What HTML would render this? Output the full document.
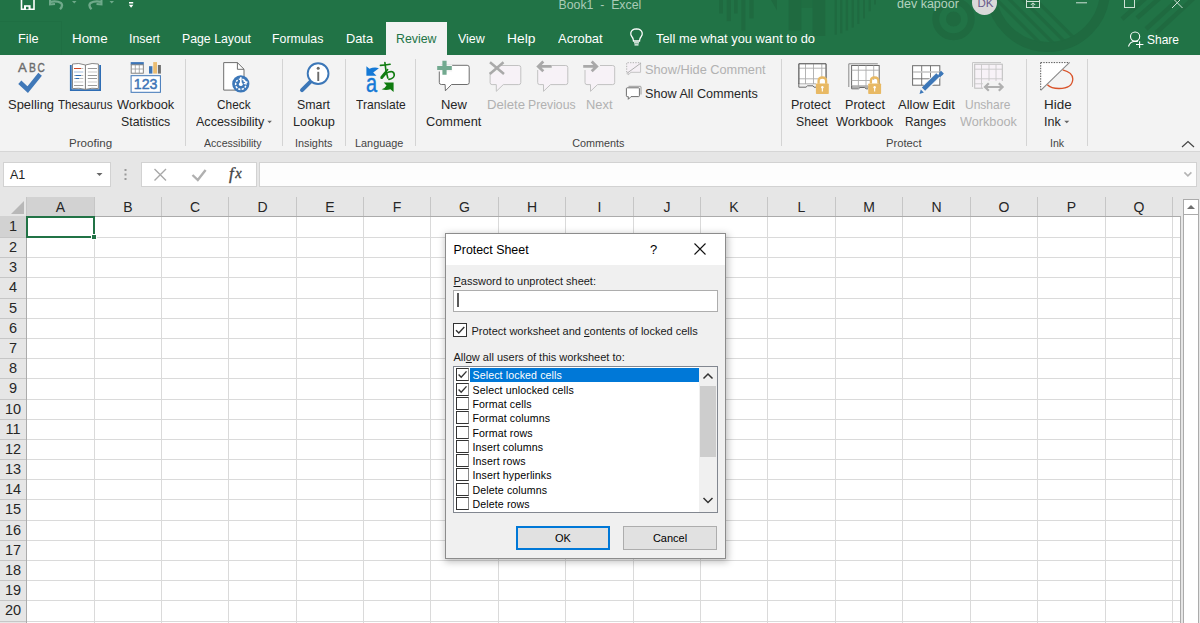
<!DOCTYPE html>
<html><head><meta charset="utf-8"><title>Excel</title><style>
*{margin:0;padding:0;box-sizing:border-box}
html,body{width:1200px;height:623px;overflow:hidden;background:#fff;font-family:"Liberation Sans",sans-serif;}
.a{position:absolute;white-space:nowrap}
#top{position:absolute;left:0;top:0;width:1200px;height:55px;background:#217346;overflow:hidden}
.tab{position:absolute;top:31px;color:#fff;font-size:12.6px;line-height:16px}
#rib{position:absolute;left:0;top:55px;width:1200px;height:97px;background:#f3f3f3;border-bottom:1px solid #d6d6d6}
.lbl{position:absolute;color:#262626;font-size:12.3px;line-height:17px;text-align:center;white-space:nowrap}
.dis{color:#b1b1b1}
.grp{position:absolute;top:81px;color:#444;font-size:11.2px;line-height:13px;text-align:center;white-space:nowrap}
.sep{position:absolute;top:4px;width:1px;height:87px;background:#d4d4d4}
#fbar{position:absolute;left:0;top:152px;width:1200px;height:45px;background:#e6e6e6}
.box{position:absolute;background:#fff;border:1px solid #d2d2d2}
#grid{position:absolute;left:0;top:197px;width:1200px;height:426px;background:#fff}
.ch{position:absolute;top:0;height:19px;background:#e6e6e6;color:#262626;font-size:14px;line-height:20px;text-align:center}
.rh{position:absolute;left:0;width:26px;background:transparent;margin-top:-1px;color:#262626;font-size:14.5px;text-align:center}
.vl{position:absolute;width:1px;background:#dadada}
.hl{position:absolute;height:1px;background:#dadada}
#dlg{position:absolute;left:445px;top:233px;width:281px;height:326px;background:#f0f0f0;border:1px solid #8c8c8c;box-shadow:1px 2px 7px 1px rgba(0,0,0,.25)}
.dt{position:absolute;color:#1a1a1a;font-size:11px;line-height:13px;white-space:nowrap}
.cb{position:absolute;width:13px;height:13px;border:1px solid #333;background:#fff}
.li{position:absolute;left:18px;color:#000;font-size:11px;line-height:13px;white-space:nowrap}
</style></head>
<body>
<div id="top">
<svg class="a" style="left:0;top:0" width="1200" height="55" viewBox="0 0 1200 55">
<g fill="#1f6a40">
<rect x="719.2" y="0" width="3.8" height="13.5"/><rect x="726.7" y="0" width="4.3" height="21.2"/>
<rect x="734" y="0" width="3.6" height="13.5"/><rect x="741.4" y="0" width="4" height="30.5"/>
<rect x="749.4" y="0" width="4.2" height="18.4"/>
<path d="M771 0 L777 0 L777 10.6 Z"/>
<rect x="788.6" y="0" width="12.8" height="30.5"/><rect x="812.5" y="0" width="12.8" height="36"/>
<rect x="801.4" y="0" width="11.1" height="8" opacity="0.6"/>
<rect x="834.6" y="0" width="2.2" height="34.7"/><rect x="840" y="0" width="2.4" height="33.3"/>
<rect x="845.7" y="0" width="2.4" height="30.5"/><rect x="851.6" y="0" width="2.2" height="27.6"/>
<rect x="857.3" y="0" width="2.1" height="24"/><rect x="863" y="0" width="2" height="18.4"/>
<rect x="868.6" y="0" width="2.2" height="11.3"/><rect x="874" y="0" width="2" height="4.5"/>
</g>
<defs><clipPath id="cc"><circle cx="1048" cy="-10" r="53"/></clipPath></defs>
<g fill="none" stroke="#1f6a40">
<circle cx="953.5" cy="19" r="17.75" stroke-width="6.9"/>
<circle cx="1048" cy="-10" r="57" stroke-width="10"/>
</g>
<circle cx="953.5" cy="19" r="7.5" fill="#1f6a40"/>
<g stroke="#1f6a40" stroke-width="3.2" clip-path="url(#cc)">
<path d="M995 -2 L1045 48"/><path d="M1006 -4 L1056 46"/><path d="M1017 -6 L1067 44"/><path d="M1028 -8 L1078 42"/>
</g>
<g stroke="#1f6a40" stroke-width="4.5">
<path d="M1122 19 L1148 -4"/><path d="M1137 18 L1162 -4"/><path d="M1146 29 L1182 -4"/><path d="M1156 33 L1196 -4"/>
</g>
</svg>
<svg class="a" style="left:0;top:0" width="160" height="22" viewBox="0 0 160 22">
<path d="M21.5 -3 V9.2 H34 V-3" fill="none" stroke="#fff" stroke-width="1.6"/>
<rect x="24" y="5.2" width="6.6" height="4" fill="#fff"/><rect x="26" y="6.8" width="2.5" height="2.5" fill="#217346"/>
<path d="M50.5 1.8 Q57 0.5 61 3 Q63.5 5.5 60 9.3" fill="none" stroke="#6fa98a" stroke-width="2.3"/>
<path d="M50 -2 L50 4.5 L55 4" fill="none" stroke="#6fa98a" stroke-width="2"/>
<path d="M72 1 L76.5 1 L74.25 3.5 Z" fill="#6fa98a"/>
<path d="M101 1.8 Q94.5 0.5 90.5 3 Q88 5.5 91.5 9.3" fill="none" stroke="#6fa98a" stroke-width="2.3"/>
<path d="M101.5 -2 L101.5 4.5 L96.5 4" fill="none" stroke="#6fa98a" stroke-width="2"/>
<path d="M109.5 1 L114 1 L111.75 3.5 Z" fill="#6fa98a"/>
<rect x="129" y="2" width="4.2" height="1.5" fill="#fff"/><path d="M128.8 4.7 L133.4 4.7 L131.1 7.8 Z" fill="#fff"/>
</svg>
<div class="a" style="left:558.5px;top:-3.5px;color:#a9cbb6;font-size:12.3px;line-height:16px">Book1&nbsp;&nbsp;-&nbsp;&nbsp;Excel</div>
<div class="a" style="left:897px;top:-4.5px;color:#b3d2bf;font-size:12.5px;line-height:16px">dev kapoor</div>
<div class="a" style="left:972px;top:-9.8px;width:24.8px;height:24.8px;border-radius:50%;background:#d9d9d9"></div>
<div class="a" style="left:977.5px;top:-3px;color:#6a5a8a;font-size:11.5px;line-height:12px">DK</div>
<svg class="a" style="left:1020px;top:0" width="180" height="22" viewBox="0 0 180 22">
<g fill="none" stroke="#cfe2d6" stroke-width="1">
<rect x="6.5" y="-3.5" width="13" height="11"/>
<path d="M6.5 1.5 H19.5"/>
<path d="M13 7 V3 M10.8 5 L13 2.8 L15.2 5"/>
<path d="M56 2.8 H67"/>
<rect x="104.5" y="-3.5" width="10" height="11"/>
<path d="M152 -2.5 L162.5 8 M162.5 -2.5 L152 8"/>
</g></svg>
<div class="a" style="left:-1px;top:21px;width:63px;height:40px;border:1px solid #1f6f43"></div>
<div class="a" style="left:18.28px;top:28.56px;font-size:12.8px;line-height:20px;color:#fff;transform:scaleX(0.9996);transform-origin:0 0;">File</div>
<div class="a" style="left:71.73px;top:28.56px;font-size:12.8px;line-height:20px;color:#fff;transform:scaleX(1.0458);transform-origin:0 0;">Home</div>
<div class="a" style="left:129.08px;top:28.56px;font-size:12.8px;line-height:20px;color:#fff;transform:scaleX(0.9680);transform-origin:0 0;">Insert</div>
<div class="a" style="left:181.72px;top:28.56px;font-size:12.8px;line-height:20px;color:#fff;transform:scaleX(0.9607);transform-origin:0 0;">Page Layout</div>
<div class="a" style="left:272.31px;top:28.56px;font-size:12.8px;line-height:20px;color:#fff;transform:scaleX(0.9633);transform-origin:0 0;">Formulas</div>
<div class="a" style="left:345.68px;top:28.56px;font-size:12.8px;line-height:20px;color:#fff;transform:scaleX(1.0006);transform-origin:0 0;">Data</div>
<div class="a" style="left:458.24px;top:28.56px;font-size:12.8px;line-height:20px;color:#fff;transform:scaleX(0.9725);transform-origin:0 0;">View</div>
<div class="a" style="left:507.20px;top:28.56px;font-size:12.8px;line-height:20px;color:#fff;transform:scaleX(1.0780);transform-origin:0 0;">Help</div>
<div class="a" style="left:557.70px;top:28.56px;font-size:12.8px;line-height:20px;color:#fff;transform:scaleX(1.0129);transform-origin:0 0;">Acrobat</div>
<div class="a" style="left:656.44px;top:28.56px;font-size:12.8px;line-height:20px;color:#fff;transform:scaleX(1.0071);transform-origin:0 0;">Tell me what you want to do</div>
<div class="a" style="left:386px;top:22px;width:61px;height:33px;background:#f3f3f3"></div>
<div class="a" style="left:395.51px;top:28.56px;font-size:12.8px;line-height:20px;color:#217346;transform:scaleX(0.9644);transform-origin:0 0;">Review</div>
<svg class="a" style="left:628px;top:28px" width="18" height="20" viewBox="0 0 18 20">
<path d="M5.5 13 Q5.5 10.5 3.8 8.5 Q2.5 6.8 2.8 4.8 Q3.5 1 8.5 0.8 Q13.5 1 14.2 4.8 Q14.5 6.8 13.2 8.5 Q11.5 10.5 11.5 13 Z" fill="none" stroke="#fff" stroke-width="1.3"/>
<path d="M6 14.8 H11 M6.5 16.8 H10.5" stroke="#fff" stroke-width="1.2"/>
</svg>
<svg class="a" style="left:1126px;top:30px" width="20" height="20" viewBox="0 0 20 20">
<circle cx="9.1" cy="6.6" r="4.6" fill="none" stroke="#fff" stroke-width="1.1"/>
<path d="M2.5 16.5 Q4 11.5 9 11.2 Q10.8 11.2 11.8 11.6" fill="none" stroke="#fff" stroke-width="1.1"/>
<path d="M13.6 11.2 V17.9 M10 14.5 H17.4" stroke="#fff" stroke-width="1.1"/>
</svg>
<div class="a" style="left:1146.56px;top:30.06px;font-size:12.8px;line-height:20px;color:#fff;transform:scaleX(0.9345);transform-origin:0 0;">Share</div>
</div>
<div id="rib">
<div class="sep" style="left:185px"></div>
<div class="sep" style="left:282px"></div>
<div class="sep" style="left:345px"></div>
<div class="sep" style="left:415px"></div>
<div class="sep" style="left:781px"></div>
<div class="sep" style="left:1026px"></div>
<div class="sep" style="left:1087px"></div>
<svg class="a" style="left:1180px;top:84px" width="16" height="10" viewBox="0 0 16 10"><path d="M2 8 L8 2.5 L14 8" fill="none" stroke="#444" stroke-width="1.2"/></svg>

<svg class="a" style="left:0;top:0" width="1200" height="96" viewBox="0 55 1200 96">
<!-- Spelling -->
<g font-family="Liberation Sans" font-size="13.6" fill="#6b6b6b" stroke="#6b6b6b" stroke-width="0.4">
<text x="18.1" y="71.5" textLength="8.8" lengthAdjust="spacingAndGlyphs">A</text>
<text x="28.9" y="71.5" textLength="6.9" lengthAdjust="spacingAndGlyphs">B</text>
<text x="37.5" y="71.5" textLength="7.3" lengthAdjust="spacingAndGlyphs">C</text>
</g>
<path d="M19.8 82.3 L27.7 89.6 L40.1 74.3" fill="none" stroke="#4078b8" stroke-width="4.6" stroke-linejoin="miter"/>
<!-- Thesaurus book -->
<path d="M70.8 65 V90.2 H100.1 V65" fill="none" stroke="#2e6db4" stroke-width="1.8"/>
<path d="M72.5 64 Q78.5 62.5 85.4 65 Q92.3 62.5 98.4 64 V88.6 Q92 87.5 85.4 89.4 Q78.8 87.5 72.5 88.6 Z" fill="#fff" stroke="#7a7a7a" stroke-width="0.9"/>
<path d="M85.4 65 V89.4" stroke="#7a7a7a" stroke-width="1"/>
<g stroke-width="1">
<path d="M74 68.5 H81.3" stroke="#d24726"/><path d="M81.3 68.5 H83.3" stroke="#bbb"/>
<path d="M74 72 H83.3" stroke="#c9d8ea" stroke-width="1.6"/>
<path d="M74 75.5 H83.3" stroke="#bbb"/><path d="M75.5 75.5 H81" stroke="#2e6db4"/>
<path d="M74 78.5 H83.3" stroke="#bbb"/><path d="M75.5 78.5 H79" stroke="#2e6db4"/>
<path d="M74 82 H83.3" stroke="#ddd" stroke-width="1.5"/>
<path d="M74 85.5 H83.3" stroke="#9a9a9a"/>
<path d="M87.8 68.5 H97" stroke="#9a9a9a"/>
<path d="M87.8 72 H97" stroke="#ddd" stroke-width="1.6"/>
<path d="M87.8 75.5 H97" stroke="#9a9a9a"/>
<path d="M87.8 78.5 H97" stroke="#9a9a9a"/>
<path d="M87.8 82 H97" stroke="#ddd" stroke-width="1.5"/>
<path d="M87.8 85.5 H97" stroke="#9a9a9a"/>
</g>
<!-- Workbook statistics -->
<rect x="130.7" y="62.1" width="13.1" height="2.7" fill="#3d75b7"/>
<rect x="131.2" y="64.8" width="12.1" height="8.4" fill="#fff" stroke="#777" stroke-width="0.9"/>
<path d="M135.3 64.8 V73.2 M139.3 64.8 V73.2 M131.2 69 H143.3" stroke="#999" stroke-width="0.8"/>
<rect x="149" y="66.2" width="3.4" height="7.4" fill="#3d75b7"/>
<rect x="153.2" y="62.1" width="3.8" height="11.5" fill="#ebbd72"/>
<rect x="157.9" y="65" width="3" height="8.6" fill="#6e6e6e"/>
<rect x="131.1" y="75.7" width="29.3" height="16.6" fill="#fff" stroke="#3d75b7" stroke-width="1"/>
<text x="133.8" y="88.9" font-family="Liberation Sans" font-size="14.4" fill="#3d75b7" stroke="#3d75b7" stroke-width="0.5" textLength="23.6" lengthAdjust="spacingAndGlyphs">123</text>
<!-- Check Accessibility -->
<path d="M223.7 62.6 H237.4 L244 69.2 V90.1 H223.7 Z" fill="#fff" stroke="#6e6e6e" stroke-width="1"/>
<path d="M237.4 62.6 V69.3 H244" fill="none" stroke="#6e6e6e" stroke-width="1"/>
<circle cx="240.8" cy="83.9" r="8.6" fill="#3c77b8"/>
<circle cx="240.8" cy="84.2" r="5.2" fill="none" stroke="#fff" stroke-width="1.5" stroke-dasharray="2.2 1.2" transform="rotate(-60 240.8 84.2)"/>
<path d="M240.8 77.2 V84" stroke="#fff" stroke-width="1.7"/>
<path d="M243.5 80.8 L246.8 82.2 L243.8 84" fill="none" stroke="#fff" stroke-width="1.3"/>
<circle cx="240.8" cy="84.2" r="1.9" fill="#fff"/>
<!-- Smart Lookup -->
<path d="M302 90.2 L310.3 81.8" stroke="#3c77b8" stroke-width="4" stroke-linecap="round"/>
<circle cx="318.1" cy="73.6" r="10.4" fill="#fff" stroke="#3c77b8" stroke-width="1.9"/>
<circle cx="318.2" cy="68.2" r="1.5" fill="#6b6b6b"/>
<rect x="317.3" y="71.8" width="1.9" height="9.2" fill="#6b6b6b"/>
<!-- Translate -->
<path d="M366.4 66.3 L366.4 75.8 L376.5 75.8 L373.2 72.5 L378.9 68.2 Q374.5 66.8 369.4 68.7 Z" fill="#1479d6"/>
<text x="0" y="0" font-family="Liberation Sans" font-size="19.5" fill="#1479d6" stroke="#1479d6" stroke-width="0.35" transform="translate(366 92.2) scale(1.02 1.36)">a</text>
<g fill="none" stroke="#107c10" stroke-width="1.6" stroke-linecap="round" stroke-linejoin="round">
<path d="M380.4 65.4 Q385 65.3 390.1 64.2"/>
<path d="M384.9 62.6 Q385.6 71 387.8 78"/>
<path d="M387.6 69.6 Q383.5 74 381.2 77 Q380.8 78.5 382 78.2 Q384.5 75.5 386.3 73.1 Q389.5 71.2 392.3 71.7 Q394.6 72.7 394.2 75.6 Q393.5 78.6 388.9 79.4"/>
</g>
<path d="M393.6 82.4 L393.6 91.9 L390.4 89.3 Q386 90.6 381.6 89.3 Q385.5 88 386.5 85.6 L383.8 82.4 Z" fill="#107c10"/>
<!-- New Comment -->
<path d="M441.3 65.3 H467.2 Q469.2 65.3 469.2 67.3 V82.5 Q469.2 84.5 467.2 84.5 H451.5 L445.4 90.8 L445.1 84.5 H441.3 Q439.3 84.5 439.3 82.5 V67.3 Q439.3 65.3 441.3 65.3 Z" fill="#fff" stroke="#6e6e6e" stroke-width="1"/>
<rect x="437.2" y="64.5" width="15" height="7" fill="#f3f3f3"/>
<rect x="438.5" y="63.8" width="13" height="0" fill="none"/>
<path d="M437.2 65.9 H451.8 V69.9 H437.2 Z M442.4 60.7 H446.6 V74.8 H442.4 Z" fill="#72a98f"/>
<!-- Delete -->
<g fill="#f7f2f7" stroke="#c2c2c2" stroke-width="1">
<path d="M492.1 65.5 H518.8 Q520.8 65.5 520.8 67.5 V82.6 Q520.8 84.6 518.8 84.6 H503.3 L496.3 91.3 L496.3 84.6 H492.1 Q490.1 84.6 490.1 82.6 V67.5 Q490.1 65.5 492.1 65.5 Z"/>
<path d="M539.7 65.5 H565.8 Q567.8 65.5 567.8 67.5 V82.6 Q567.8 84.6 565.8 84.6 H550.5 L543.5 91.3 L543.5 84.6 H539.7 Q537.7 84.6 537.7 82.6 V67.5 Q537.7 65.5 539.7 65.5 Z"/>
<path d="M587 65.5 H612.7 Q614.7 65.5 614.7 67.5 V82.6 Q614.7 84.6 612.7 84.6 H597.5 L590.5 91.3 L590.5 84.6 H587 Q585 84.6 585 82.6 V67.5 Q585 65.5 587 65.5 Z"/>
</g>
<rect x="488" y="62" width="12" height="10" fill="#f3f3f3"/>
<path d="M490 62.3 L504 74 M503.5 62.3 L489.8 74" stroke="#a9a9a9" stroke-width="2.5"/>
<rect x="535" y="60" width="17" height="10" fill="#f3f3f3"/>
<path d="M551.7 66.4 H539 M543.3 61.6 L538.3 66.4 L543.3 71.2" fill="none" stroke="#a9a9a9" stroke-width="2.8"/>
<rect x="583" y="60" width="17" height="10" fill="#f3f3f3"/>
<path d="M583.2 66.4 H596 M591.7 61.6 L596.7 66.4 L591.7 71.2" fill="none" stroke="#a9a9a9" stroke-width="2.8"/>
<!-- Show/Hide comment -->
<path d="M626.7 62.7 H640.6 V72.3 H631 L628 75 L628.2 72.3 H626.7 Z" fill="#f5f0f5" stroke="none"/>
<path d="M626.7 72.3 V62.7 H640.6" fill="none" stroke="#b0b0b0" stroke-width="1" stroke-dasharray="1.3 1.3"/>
<path d="M640.6 62.7 V72.3 H631 L628 75 L628.2 72.3" fill="none" stroke="#c4c4c4" stroke-width="1"/>
<path d="M626.7 73.5 L641 63" stroke="#b0b0b0" stroke-width="1"/>
<!-- Show all comments -->
<path d="M628.5 86.3 H640.3 Q641 86.3 641 87 V94.5" fill="none" stroke="#9a9a9a" stroke-width="1"/>
<path d="M627.2 87.8 H638.6 Q639.4 87.8 639.4 88.6 V95.8 Q639.4 96.6 638.6 96.6 H631 L628.3 99.3 L628.3 96.6 H627.2 Q626.4 96.6 626.4 95.8 V88.6 Q626.4 87.8 627.2 87.8 Z" fill="#fff" stroke="#6e6e6e" stroke-width="1"/>
<!-- Protect Sheet -->
<g>
<path d="M798.8 84 V63.8 H826 V79" fill="#fff" stroke="#6a6a6a" stroke-width="1"/>
<rect x="799.3" y="64.3" width="26.2" height="19.5" fill="#fff"/>
<path d="M805.5 64 V84 M813.5 64 V84 M821.8 64 V78 M799 68.2 H826 M799 78.8 H818 M799 83.8 H816" stroke="#ababab" stroke-width="0.9"/>
<path d="M798.8 83 V87.2 H806 L807.5 85.8 H813 L814 87.2 H816" fill="none" stroke="#6a6a6a" stroke-width="1"/>
<path d="M799 83.5 V63.8 H826 V78" fill="none" stroke="#6a6a6a" stroke-width="1"/>
<path d="M818.6 83.8 V81 Q818.6 77.5 822.35 77.5 Q826.1 77.5 826.1 81 V83.8" fill="none" stroke="#e8b964" stroke-width="2.3"/>
<rect x="815.9" y="83.5" width="12.9" height="10.5" rx="0.8" fill="#e8b964"/>
<circle cx="822.35" cy="87.3" r="1.2" fill="#fff"/><rect x="821.8" y="87.5" width="1.1" height="4" fill="#fff"/>
</g>
<!-- Protect Workbook -->
<g>
<path d="M848.8 87 V63.8 H877.8" fill="none" stroke="#8a8a8a" stroke-width="1"/>
<rect x="851.6" y="65.5" width="27.6" height="21.5" fill="#fff" stroke="#6a6a6a" stroke-width="1"/>
<path d="M858.4 65.5 V87 M866 65.5 V87 M873.7 65.5 V80 M851.6 70.2 H879.2 M851.6 80.5 H870 M851.6 85.7 H868" stroke="#ababab" stroke-width="0.9"/>
<path d="M851.6 86 V88.8 H858.5 L860 87.5 H864.5 L866 88.8 H868" fill="none" stroke="#6a6a6a" stroke-width="1"/>
<path d="M870.9 83.6 V81 Q870.9 77.5 874.65 77.5 Q878.4 77.5 878.4 81 V83.6" fill="none" stroke="#e8b964" stroke-width="2.3"/>
<rect x="868.2" y="83.4" width="12.9" height="10.6" rx="0.8" fill="#e8b964"/>
<circle cx="874.65" cy="87.3" r="1.2" fill="#fff"/><rect x="874.1" y="87.5" width="1.1" height="4" fill="#fff"/>
</g>
<!-- Allow Edit Ranges -->
<g>
<rect x="912.6" y="65.7" width="27.2" height="19.5" fill="#fff" stroke="#6a6a6a" stroke-width="1"/>
<path d="M921.7 65.7 V85.2 M930.5 65.7 V78.8 M912.6 78.8 H930.5" stroke="#6a6a6a" stroke-width="0.9"/>
<path d="M913 72 H939.5" stroke="#c8c8c8" stroke-width="1.6"/>
<rect x="924" y="79.5" width="17" height="7" fill="#f3f3f3" transform="rotate(-45 930 83)"/>
<path d="M939.5 73.5 L941.7 75.7" stroke="#3c77b8" stroke-width="4.6"/>
<path d="M923.5 89.2 L938 74.8" stroke="#3c77b8" stroke-width="4.6"/>
<path d="M919.5 94 L920.8 89.6 L923.8 92.6 Z" fill="#3c77b8"/>
<path d="M939 73 L941 70.8 L943.8 73.6 L941.7 75.8 Z" fill="#3c77b8"/>
</g>
<!-- Unshare Workbook -->
<g>
<path d="M972.5 87 V62.5 H1001" fill="none" stroke="#c8c8c8" stroke-width="1"/>
<rect x="974.7" y="64.2" width="27.6" height="24" fill="#f7f2f7" stroke="#bdbdbd" stroke-width="1"/>
<path d="M981.5 64.2 V88.2 M989 64.2 V88.2 M996 64.2 V84 M974.7 69.2 H1002.3 M974.7 78.8 H1002.3 M974.7 83.8 H985" stroke="#c8c8c8" stroke-width="0.9"/>
<rect x="983" y="81" width="22" height="12" fill="#f3f3f3"/>
<path d="M986 87 H1001.5 M988.8 83.2 L985 87 L988.8 90.8 M998.8 83.2 L1002.6 87 L998.8 90.8" fill="none" stroke="#b0b0b0" stroke-width="2.2"/>
</g>
<!-- Hide Ink -->
<path d="M1040.7 62.4 H1069.4 L1040.7 90.3 Z" fill="#fff"/>
<path d="M1040.7 62.6 H1069.4 M1040.7 62.6 V90.3" fill="none" stroke="#555" stroke-width="1" stroke-dasharray="1.4 1.2"/>
<path d="M1040.7 90.3 L1069.6 62.4" stroke="#888" stroke-width="1.1"/>
<path d="M1062.7 69.9 Q1072.8 72.5 1072.8 79 Q1072.5 88.5 1059 88.5 Q1051 88.5 1047.4 84.8" fill="none" stroke="#d9532a" stroke-width="1.3"/>
</svg>

</div>
<div class="a" style="left:8.12px;top:95.33px;font-size:12.6px;line-height:20px;color:#262626;transform:scaleX(1.0275);transform-origin:0 0;">Spelling</div>
<div class="a" style="left:58.47px;top:95.33px;font-size:12.6px;line-height:20px;color:#262626;transform:scaleX(0.9143);transform-origin:0 0;">Thesaurus</div>
<div class="a" style="left:117.44px;top:95.33px;font-size:12.6px;line-height:20px;color:#262626;transform:scaleX(1.0133);transform-origin:0 0;">Workbook</div>
<div class="a" style="left:121.15px;top:112.13px;font-size:12.6px;line-height:20px;color:#262626;transform:scaleX(0.9779);transform-origin:0 0;">Statistics</div>
<div class="a" style="left:69.37px;top:132.56px;font-size:10.8px;line-height:20px;color:#444;transform:scaleX(1.0708);transform-origin:0 0;">Proofing</div>
<div class="a" style="left:217.01px;top:95.33px;font-size:12.6px;line-height:20px;color:#262626;transform:scaleX(0.9404);transform-origin:0 0;">Check</div>
<div class="a" style="left:195.60px;top:112.13px;font-size:12.6px;line-height:20px;color:#262626;transform:scaleX(0.9955);transform-origin:0 0;">Accessibility</div>
<div class="a" style="left:204.40px;top:132.56px;font-size:10.8px;line-height:20px;color:#444;transform:scaleX(0.9795);transform-origin:0 0;">Accessibility</div>
<div class="a" style="left:297.04px;top:95.33px;font-size:12.6px;line-height:20px;color:#262626;transform:scaleX(0.9833);transform-origin:0 0;">Smart</div>
<div class="a" style="left:292.98px;top:112.13px;font-size:12.6px;line-height:20px;color:#262626;transform:scaleX(1.0147);transform-origin:0 0;">Lookup</div>
<div class="a" style="left:294.62px;top:132.56px;font-size:10.8px;line-height:20px;color:#444;transform:scaleX(1.0040);transform-origin:0 0;">Insights</div>
<div class="a" style="left:355.76px;top:95.33px;font-size:12.6px;line-height:20px;color:#262626;transform:scaleX(0.9567);transform-origin:0 0;">Translate</div>
<div class="a" style="left:355.13px;top:132.56px;font-size:10.8px;line-height:20px;color:#444;transform:scaleX(1.0062);transform-origin:0 0;">Language</div>
<div class="a" style="left:440.96px;top:95.33px;font-size:12.6px;line-height:20px;color:#262626;transform:scaleX(1.0307);transform-origin:0 0;">New</div>
<div class="a" style="left:425.76px;top:112.13px;font-size:12.6px;line-height:20px;color:#262626;transform:scaleX(1.0136);transform-origin:0 0;">Comment</div>
<div class="a" style="left:486.55px;top:95.33px;font-size:12.6px;line-height:20px;color:#b1b1b1;transform:scaleX(1.0448);transform-origin:0 0;">Delete</div>
<div class="a" style="left:528.42px;top:95.33px;font-size:12.6px;line-height:20px;color:#b1b1b1;transform:scaleX(0.9713);transform-origin:0 0;">Previous</div>
<div class="a" style="left:585.97px;top:95.33px;font-size:12.6px;line-height:20px;color:#b1b1b1;transform:scaleX(1.0233);transform-origin:0 0;">Next</div>
<div class="a" style="left:645.03px;top:59.63px;font-size:12.6px;line-height:20px;color:#b1b1b1;transform:scaleX(1.0137);transform-origin:0 0;">Show/Hide Comment</div>
<div class="a" style="left:645.03px;top:84.03px;font-size:12.6px;line-height:20px;color:#262626;transform:scaleX(1.0021);transform-origin:0 0;">Show All Comments</div>
<div class="a" style="left:572.16px;top:132.56px;font-size:10.8px;line-height:20px;color:#444;transform:scaleX(1.0000);transform-origin:0 0;">Comments</div>
<div class="a" style="left:791.40px;top:95.33px;font-size:12.6px;line-height:20px;color:#262626;transform:scaleX(0.9946);transform-origin:0 0;">Protect</div>
<div class="a" style="left:795.85px;top:112.13px;font-size:12.6px;line-height:20px;color:#262626;transform:scaleX(0.9673);transform-origin:0 0;">Sheet</div>
<div class="a" style="left:844.59px;top:95.33px;font-size:12.6px;line-height:20px;color:#262626;transform:scaleX(0.9998);transform-origin:0 0;">Protect</div>
<div class="a" style="left:836.34px;top:112.13px;font-size:12.6px;line-height:20px;color:#262626;transform:scaleX(1.0133);transform-origin:0 0;">Workbook</div>
<div class="a" style="left:897.60px;top:95.33px;font-size:12.6px;line-height:20px;color:#262626;transform:scaleX(1.0280);transform-origin:0 0;">Allow Edit</div>
<div class="a" style="left:905.45px;top:112.13px;font-size:12.6px;line-height:20px;color:#262626;transform:scaleX(0.9438);transform-origin:0 0;">Ranges</div>
<div class="a" style="left:965.10px;top:95.33px;font-size:12.6px;line-height:20px;color:#b1b1b1;transform:scaleX(0.9541);transform-origin:0 0;">Unshare</div>
<div class="a" style="left:959.54px;top:112.13px;font-size:12.6px;line-height:20px;color:#b1b1b1;transform:scaleX(1.0062);transform-origin:0 0;">Workbook</div>
<div class="a" style="left:885.50px;top:132.56px;font-size:10.8px;line-height:20px;color:#444;transform:scaleX(1.0402);transform-origin:0 0;">Protect</div>
<div class="a" style="left:1043.63px;top:95.33px;font-size:12.6px;line-height:20px;color:#262626;transform:scaleX(1.0651);transform-origin:0 0;">Hide</div>
<div class="a" style="left:1044.37px;top:112.13px;font-size:12.6px;line-height:20px;color:#262626;transform:scaleX(0.9945);transform-origin:0 0;">Ink</div>
<div class="a" style="left:1049.75px;top:132.56px;font-size:10.8px;line-height:20px;color:#444;transform:scaleX(0.9817);transform-origin:0 0;">Ink</div>
<svg class="a" style="left:0;top:0" width="1200" height="130"><path d="M267.3 120.8 H271.9 L269.6 123.2 Z M1064.2 120.8 H1069.3 L1066.75 123.2 Z" fill="#666"/></svg>
<div id="fbar">
<div class="box" style="left:3px;top:10px;width:108px;height:25px;border-color:#d2d2d2"></div>
<div class="a" style="left:10px;top:15px;font-size:12.5px;line-height:16px;color:#222">A1</div>
<svg class="a" style="left:94px;top:19px" width="10" height="6"><path d="M2.5 2 L8.5 2 L5.5 5 Z" fill="#666"/></svg>
<svg class="a" style="left:123px;top:16px" width="6" height="14"><g fill="#9a9a9a"><rect x="1.5" y="1" width="2" height="2"/><rect x="1.5" y="5.5" width="2" height="2"/><rect x="1.5" y="10" width="2" height="2"/></g></svg>
<div class="box" style="left:141px;top:10px;width:116px;height:25px"></div>
<svg class="a" style="left:141px;top:152px;position:absolute" width="0" height="0"></svg>
<svg class="a" style="left:150px;top:13px" width="100" height="20" viewBox="0 0 100 20">
<path d="M4.5 4 L16 15.5 M16 4 L4.5 15.5" stroke="#a8a8a8" stroke-width="1.4" fill="none"/>
<path d="M42.5 10 L47.8 15 L55.6 5" stroke="#b0b0b0" stroke-width="2.4" fill="none"/>
</svg>
<svg class="a" style="left:225px;top:10px" width="24" height="24" viewBox="0 0 24 24"><text x="4" y="17.2" font-family="Liberation Serif" font-style="italic" font-size="17" fill="#444" stroke="#444" stroke-width="0.35">f</text><text x="10.2" y="16.2" font-family="Liberation Serif" font-style="italic" font-size="14.5" fill="#444" stroke="#444" stroke-width="0.35">x</text></svg>
<div class="box" style="left:259px;top:10px;width:938px;height:25px;background:#fdfdfd"></div>
<svg class="a" style="left:1182px;top:19px" width="12" height="8"><path d="M2.4 1.4 L5.9 4.9 L9.4 1.4" fill="none" stroke="#b4b4b4" stroke-width="1.6"/></svg>
</div>
<div id="grid">
<div class="a" style="left:0;top:0;width:1200px;height:19px;background:#e6e6e6"></div>
<svg class="a" style="left:0;top:0" width="26" height="19"><path d="M24 4 L24 17 L11 17 Z" fill="#b8b8b8"/></svg>
<div class="a" style="left:27px;top:0;width:67px;height:19px;background:#d2d2d2"></div>
<div class="ch" style="left:27px;width:67px;background:transparent">A</div>
<div class="ch" style="left:95px;width:66px;background:transparent">B</div>
<div class="ch" style="left:162px;width:66px;background:transparent">C</div>
<div class="ch" style="left:229px;width:67px;background:transparent">D</div>
<div class="ch" style="left:297px;width:66px;background:transparent">E</div>
<div class="ch" style="left:364px;width:66px;background:transparent">F</div>
<div class="ch" style="left:431px;width:67px;background:transparent">G</div>
<div class="ch" style="left:499px;width:66px;background:transparent">H</div>
<div class="ch" style="left:566px;width:67px;background:transparent">I</div>
<div class="ch" style="left:634px;width:66px;background:transparent">J</div>
<div class="ch" style="left:701px;width:66px;background:transparent">K</div>
<div class="ch" style="left:768px;width:67px;background:transparent">L</div>
<div class="ch" style="left:836px;width:66px;background:transparent">M</div>
<div class="ch" style="left:903px;width:67px;background:transparent">N</div>
<div class="ch" style="left:971px;width:66px;background:transparent">O</div>
<div class="ch" style="left:1038px;width:67px;background:transparent">P</div>
<div class="ch" style="left:1106px;width:66px;background:transparent">Q</div>
<div class="vl" style="left:26px;top:0;height:19px;background:#c6c6c6"></div>
<div class="vl" style="left:94px;top:0;height:19px;background:#c6c6c6"></div>
<div class="vl" style="left:161px;top:0;height:19px;background:#c6c6c6"></div>
<div class="vl" style="left:228px;top:0;height:19px;background:#c6c6c6"></div>
<div class="vl" style="left:296px;top:0;height:19px;background:#c6c6c6"></div>
<div class="vl" style="left:363px;top:0;height:19px;background:#c6c6c6"></div>
<div class="vl" style="left:430px;top:0;height:19px;background:#c6c6c6"></div>
<div class="vl" style="left:498px;top:0;height:19px;background:#c6c6c6"></div>
<div class="vl" style="left:565px;top:0;height:19px;background:#c6c6c6"></div>
<div class="vl" style="left:633px;top:0;height:19px;background:#c6c6c6"></div>
<div class="vl" style="left:700px;top:0;height:19px;background:#c6c6c6"></div>
<div class="vl" style="left:767px;top:0;height:19px;background:#c6c6c6"></div>
<div class="vl" style="left:835px;top:0;height:19px;background:#c6c6c6"></div>
<div class="vl" style="left:902px;top:0;height:19px;background:#c6c6c6"></div>
<div class="vl" style="left:970px;top:0;height:19px;background:#c6c6c6"></div>
<div class="vl" style="left:1037px;top:0;height:19px;background:#c6c6c6"></div>
<div class="vl" style="left:1105px;top:0;height:19px;background:#c6c6c6"></div>
<div class="vl" style="left:1172px;top:0;height:19px;background:#c6c6c6"></div>
<div class="a" style="left:26px;top:19px;width:1155px;height:1px;background:#ababab"></div>
<div class="a" style="left:0;top:19px;width:26px;height:407px;background:#e6e6e6"></div>
<div class="a" style="left:0;top:19px;width:26px;height:21px;background:#d2d2d2"></div>
<div class="a" style="left:26px;top:19px;width:1px;height:407px;background:#ababab"></div>
<div class="rh" style="top:20px;height:21px;line-height:21px">1</div>
<div class="hl" style="left:0;top:40px;width:26px;background:#c6c6c6"></div>
<div class="hl" style="left:27px;top:40px;width:1153px"></div>
<div class="rh" style="top:41px;height:20px;line-height:20px">2</div>
<div class="hl" style="left:0;top:60px;width:26px;background:#c6c6c6"></div>
<div class="hl" style="left:27px;top:60px;width:1153px"></div>
<div class="rh" style="top:61px;height:20px;line-height:20px">3</div>
<div class="hl" style="left:0;top:80px;width:26px;background:#c6c6c6"></div>
<div class="hl" style="left:27px;top:80px;width:1153px"></div>
<div class="rh" style="top:81px;height:21px;line-height:21px">4</div>
<div class="hl" style="left:0;top:101px;width:26px;background:#c6c6c6"></div>
<div class="hl" style="left:27px;top:101px;width:1153px"></div>
<div class="rh" style="top:102px;height:20px;line-height:20px">5</div>
<div class="hl" style="left:0;top:121px;width:26px;background:#c6c6c6"></div>
<div class="hl" style="left:27px;top:121px;width:1153px"></div>
<div class="rh" style="top:122px;height:20px;line-height:20px">6</div>
<div class="hl" style="left:0;top:141px;width:26px;background:#c6c6c6"></div>
<div class="hl" style="left:27px;top:141px;width:1153px"></div>
<div class="rh" style="top:142px;height:20px;line-height:20px">7</div>
<div class="hl" style="left:0;top:161px;width:26px;background:#c6c6c6"></div>
<div class="hl" style="left:27px;top:161px;width:1153px"></div>
<div class="rh" style="top:162px;height:20px;line-height:20px">8</div>
<div class="hl" style="left:0;top:181px;width:26px;background:#c6c6c6"></div>
<div class="hl" style="left:27px;top:181px;width:1153px"></div>
<div class="rh" style="top:182px;height:21px;line-height:21px">9</div>
<div class="hl" style="left:0;top:202px;width:26px;background:#c6c6c6"></div>
<div class="hl" style="left:27px;top:202px;width:1153px"></div>
<div class="rh" style="top:203px;height:20px;line-height:20px">10</div>
<div class="hl" style="left:0;top:222px;width:26px;background:#c6c6c6"></div>
<div class="hl" style="left:27px;top:222px;width:1153px"></div>
<div class="rh" style="top:223px;height:20px;line-height:20px">11</div>
<div class="hl" style="left:0;top:242px;width:26px;background:#c6c6c6"></div>
<div class="hl" style="left:27px;top:242px;width:1153px"></div>
<div class="rh" style="top:243px;height:20px;line-height:20px">12</div>
<div class="hl" style="left:0;top:262px;width:26px;background:#c6c6c6"></div>
<div class="hl" style="left:27px;top:262px;width:1153px"></div>
<div class="rh" style="top:263px;height:20px;line-height:20px">13</div>
<div class="hl" style="left:0;top:282px;width:26px;background:#c6c6c6"></div>
<div class="hl" style="left:27px;top:282px;width:1153px"></div>
<div class="rh" style="top:283px;height:20px;line-height:20px">14</div>
<div class="hl" style="left:0;top:302px;width:26px;background:#c6c6c6"></div>
<div class="hl" style="left:27px;top:302px;width:1153px"></div>
<div class="rh" style="top:303px;height:21px;line-height:21px">15</div>
<div class="hl" style="left:0;top:323px;width:26px;background:#c6c6c6"></div>
<div class="hl" style="left:27px;top:323px;width:1153px"></div>
<div class="rh" style="top:324px;height:20px;line-height:20px">16</div>
<div class="hl" style="left:0;top:343px;width:26px;background:#c6c6c6"></div>
<div class="hl" style="left:27px;top:343px;width:1153px"></div>
<div class="rh" style="top:344px;height:20px;line-height:20px">17</div>
<div class="hl" style="left:0;top:363px;width:26px;background:#c6c6c6"></div>
<div class="hl" style="left:27px;top:363px;width:1153px"></div>
<div class="rh" style="top:364px;height:20px;line-height:20px">18</div>
<div class="hl" style="left:0;top:383px;width:26px;background:#c6c6c6"></div>
<div class="hl" style="left:27px;top:383px;width:1153px"></div>
<div class="rh" style="top:384px;height:20px;line-height:20px">19</div>
<div class="hl" style="left:0;top:403px;width:26px;background:#c6c6c6"></div>
<div class="hl" style="left:27px;top:403px;width:1153px"></div>
<div class="rh" style="top:404px;height:21px;line-height:21px">20</div>
<div class="hl" style="left:0;top:424px;width:26px;background:#c6c6c6"></div>
<div class="hl" style="left:27px;top:424px;width:1153px"></div>
<div class="vl" style="left:94px;top:20px;height:406px"></div>
<div class="vl" style="left:161px;top:20px;height:406px"></div>
<div class="vl" style="left:228px;top:20px;height:406px"></div>
<div class="vl" style="left:296px;top:20px;height:406px"></div>
<div class="vl" style="left:363px;top:20px;height:406px"></div>
<div class="vl" style="left:430px;top:20px;height:406px"></div>
<div class="vl" style="left:498px;top:20px;height:406px"></div>
<div class="vl" style="left:565px;top:20px;height:406px"></div>
<div class="vl" style="left:633px;top:20px;height:406px"></div>
<div class="vl" style="left:700px;top:20px;height:406px"></div>
<div class="vl" style="left:767px;top:20px;height:406px"></div>
<div class="vl" style="left:835px;top:20px;height:406px"></div>
<div class="vl" style="left:902px;top:20px;height:406px"></div>
<div class="vl" style="left:970px;top:20px;height:406px"></div>
<div class="vl" style="left:1037px;top:20px;height:406px"></div>
<div class="vl" style="left:1105px;top:20px;height:406px"></div>
<div class="vl" style="left:1172px;top:20px;height:406px"></div>
<div class="a" style="left:1180px;top:19px;width:1px;height:407px;background:#ababab"></div>
<div class="a" style="left:1181px;top:0;width:19px;height:426px;background:#e6e6e6"></div>
<div class="a" style="left:1183px;top:2px;width:16px;height:440px;background:#fff;border:1px solid #ababab"></div>
<div class="a" style="left:1183px;top:2px;width:16px;height:16px;border:1px solid #ababab;background:#fff"></div>
<svg class="a" style="left:1185px;top:6px" width="12" height="8"><path d="M2 6 L6 2 L10 6 Z" fill="#707070"/></svg>
<div class="a" style="left:26px;top:19px;width:69px;height:22px;border:2px solid #217346"></div>
<div class="a" style="left:91px;top:37px;width:6px;height:6px;background:#217346;border:1px solid #fff"></div>
</div>
<div id="dlg">
<div class="a" style="left:0;top:0;width:279px;height:31px;background:#fff"></div>
<div class="dt" style="left:7.5px;top:8.0px;font-size:12.4px;line-height:16px;color:#000">Protect Sheet</div>
<div class="dt" style="left:204.0px;top:8.0px;font-size:13px;line-height:16px;color:#000">?</div>
<svg class="a" style="left:247.0px;top:8.0px" width="14" height="14" viewBox="0 0 14 14"><path d="M1.5 1.5 L12.5 12.5 M12.5 1.5 L1.5 12.5" stroke="#111" stroke-width="1.1"/></svg>
<div class="dt" style="left:7.5px;top:41.0px"><u>P</u>assword to unprotect sheet:</div>
<div class="a" style="left:7.0px;top:56.0px;width:265px;height:22px;background:#fff;border:1px solid #adadad"></div>
<div class="a" style="left:11.0px;top:59.0px;width:2px;height:14px;background:#5a5a5a"></div>
<div class="cb" style="left:7.0px;top:89.0px;width:14px;height:14px"></div>
<svg class="a" style="left:7.0px;top:89.0px" width="14" height="14" viewBox="0 0 14 14"><path d="M3 7.2 L5.8 10 L11.3 4" fill="none" stroke="#333" stroke-width="1.4"/></svg>
<div class="dt" style="left:25.5px;top:91.0px">Protect worksheet and <u>c</u>ontents of locked cells</div>
<div class="dt" style="left:7.5px;top:117.0px">All<u>o</u>w all users of this worksheet to:</div>
<div class="a" style="left:7.0px;top:132.0px;width:265px;height:147px;background:#fff;border:1px solid #828790"></div>
<div class="a" style="left:24.0px;top:134.0px;width:229px;height:14px;background:#0078d7"></div>
<div class="cb" style="left:10.0px;top:134.0px;width:13px;height:13px;border-color:#333 #8a8a8a #333 #333"></div>
<svg class="a" style="left:10.0px;top:134.0px" width="13" height="13" viewBox="0 0 13 13"><path d="M2.6 6.5 L5.2 9.2 L10.5 3.4" fill="none" stroke="#333" stroke-width="1.4"/></svg>
<div class="dt" style="left:26.5px;top:133.5px;color:#fff;font-size:10.6px;line-height:14px;letter-spacing:0.12px">Select locked cells</div>
<div class="cb" style="left:10.0px;top:149.0px;width:13px;height:13px;border-color:#333 #8a8a8a #333 #333"></div>
<svg class="a" style="left:10.0px;top:149.0px" width="13" height="13" viewBox="0 0 13 13"><path d="M2.6 6.5 L5.2 9.2 L10.5 3.4" fill="none" stroke="#333" stroke-width="1.4"/></svg>
<div class="dt" style="left:26.5px;top:148.5px;color:#000;font-size:10.6px;line-height:14px;letter-spacing:0.12px">Select unlocked cells</div>
<div class="cb" style="left:10.0px;top:163.0px;width:13px;height:13px;border-color:#333 #8a8a8a #333 #333"></div>
<div class="dt" style="left:26.5px;top:162.5px;color:#000;font-size:10.6px;line-height:14px;letter-spacing:0.12px">Format cells</div>
<div class="cb" style="left:10.0px;top:177.0px;width:13px;height:13px;border-color:#333 #8a8a8a #333 #333"></div>
<div class="dt" style="left:26.5px;top:176.5px;color:#000;font-size:10.6px;line-height:14px;letter-spacing:0.12px">Format columns</div>
<div class="cb" style="left:10.0px;top:192.0px;width:13px;height:13px;border-color:#333 #8a8a8a #333 #333"></div>
<div class="dt" style="left:26.5px;top:191.5px;color:#000;font-size:10.6px;line-height:14px;letter-spacing:0.12px">Format rows</div>
<div class="cb" style="left:10.0px;top:206.0px;width:13px;height:13px;border-color:#333 #8a8a8a #333 #333"></div>
<div class="dt" style="left:26.5px;top:205.5px;color:#000;font-size:10.6px;line-height:14px;letter-spacing:0.12px">Insert columns</div>
<div class="cb" style="left:10.0px;top:220.0px;width:13px;height:13px;border-color:#333 #8a8a8a #333 #333"></div>
<div class="dt" style="left:26.5px;top:219.5px;color:#000;font-size:10.6px;line-height:14px;letter-spacing:0.12px">Insert rows</div>
<div class="cb" style="left:10.0px;top:234.0px;width:13px;height:13px;border-color:#333 #8a8a8a #333 #333"></div>
<div class="dt" style="left:26.5px;top:233.5px;color:#000;font-size:10.6px;line-height:14px;letter-spacing:0.12px">Insert hyperlinks</div>
<div class="cb" style="left:10.0px;top:249.0px;width:13px;height:13px;border-color:#333 #8a8a8a #333 #333"></div>
<div class="dt" style="left:26.5px;top:248.5px;color:#000;font-size:10.6px;line-height:14px;letter-spacing:0.12px">Delete columns</div>
<div class="cb" style="left:10.0px;top:263.0px;width:13px;height:13px;border-color:#333 #8a8a8a #333 #333"></div>
<div class="dt" style="left:26.5px;top:262.5px;color:#000;font-size:10.6px;line-height:14px;letter-spacing:0.12px">Delete rows</div>
<div class="a" style="left:253.0px;top:133.0px;width:18px;height:145px;background:#f0f0f0"></div>
<div class="a" style="left:254.0px;top:152.0px;width:16px;height:71px;background:#cdcdcd"></div>
<svg class="a" style="left:255.0px;top:137.0px" width="14" height="10" viewBox="0 0 14 10"><path d="M2.5 7.5 L7 3 L11.5 7.5" fill="none" stroke="#333" stroke-width="1.5"/></svg>
<svg class="a" style="left:255.0px;top:261.0px" width="14" height="10" viewBox="0 0 14 10"><path d="M2.5 3 L7 7.5 L11.5 3" fill="none" stroke="#333" stroke-width="1.5"/></svg>
<div class="a" style="left:70.0px;top:291.5px;width:94px;height:24px;background:#e1e1e1;border:2px solid #0078d7;font-size:11px;line-height:20px;text-align:center;color:#000">OK</div>
<div class="a" style="left:177.0px;top:291.5px;width:94px;height:24px;background:#e1e1e1;border:1px solid #adadad;font-size:11px;line-height:22px;text-align:center;color:#000">Cancel</div>
</div>
</body></html>
